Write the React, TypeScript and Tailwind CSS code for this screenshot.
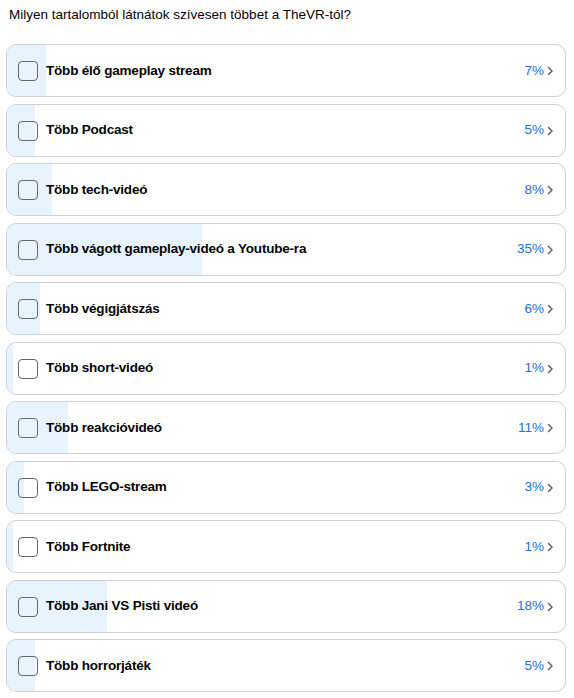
import React from "react";

const items: [string, number][] = [
  ["Több élő gameplay stream", 7],
  ["Több Podcast", 5],
  ["Több tech-videó", 8],
  ["Több vágott gameplay-videó a Youtube-ra", 35],
  ["Több végigjátszás", 6],
  ["Több short-videó", 1],
  ["Több reakcióvideó", 11],
  ["Több LEGO-stream", 3],
  ["Több Fortnite", 1],
  ["Több Jani VS Pisti videó", 18],
  ["Több horrorjáték", 5],
];

export default function App() {
  return (
    <div className="w-[574px] h-[698px] bg-white overflow-hidden" style={{ fontFamily: '"Liberation Sans", Arial, sans-serif' }}>
      <div className="pl-[9px] pt-[5px] h-[44px] text-[13.5px] text-[#050505] leading-[20px]">
        Milyen tartalomból látnátok szívesen többet a TheVR-tól?
      </div>
      <div className="flex flex-col gap-[6.5px] pl-[6px] pr-[8px]">
        {items.map(([label, pct]) => (
          <div key={label} className="relative h-[53px] rounded-[10px] border border-[#ced0d4] overflow-hidden flex items-center">
            <div className="absolute left-0 top-0 bottom-0 bg-[#e7f3ff]" style={{ width: `${pct}%` }} />
            <div className="relative flex items-center w-full pl-[11px] pr-[11px] pt-[1px]">
              <div className="w-[20px] h-[20px] rounded-[4px] border-[1.5px] border-[#65676b] bg-transparent" />
              <span className="ml-[8px] text-[13.5px] font-bold text-[#050505] tracking-[-0.2px]">{label}</span>
              <span className="ml-auto text-[13.5px] text-[#216fdb]">{pct}%</span>
              <svg className="ml-[2px]" width="8" height="12" viewBox="0 0 8 12">
                <path d="M2.5 2.5 L6 6 L2.5 9.5" fill="none" stroke="#65676b" strokeWidth="1.6" strokeLinecap="round" strokeLinejoin="round" />
              </svg>
            </div>
          </div>
        ))}
      </div>
    </div>
  );
}
